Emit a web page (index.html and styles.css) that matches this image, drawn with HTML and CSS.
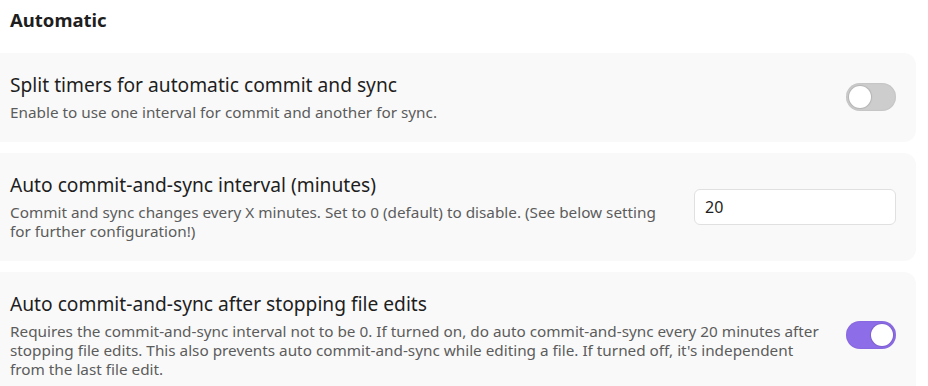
FILE: index.html
```html
<!DOCTYPE html>
<html lang="en">
<head>
<meta charset="utf-8">
<title>Automatic</title>
<link rel="stylesheet" href="styles.css">
</head>
<body>
<div class="page">
  <h2 class="heading">Automatic</h2>

  <div class="setting">
    <div class="info">
      <div class="name">Split timers for automatic commit and sync</div>
      <div class="desc">Enable to use one interval for commit and another for sync.</div>
    </div>
    <div class="control">
      <div class="toggle"><div class="knob"></div></div>
    </div>
  </div>

  <div class="setting">
    <div class="info">
      <div class="name">Auto commit-and-sync interval (minutes)</div>
      <div class="desc">Commit and sync changes every X minutes. Set to 0 (default) to disable. (See below setting for further configuration!)</div>
    </div>
    <div class="control">
      <input class="text-input" type="text" value="20">
    </div>
  </div>

  <div class="setting">
    <div class="info">
      <div class="name">Auto commit-and-sync after stopping file edits</div>
      <div class="desc">Requires the commit-and-sync interval not to be 0. If turned on, do auto commit-and-sync every 20 minutes after stopping file edits. This also prevents auto commit-and-sync while editing a file. If turned off, it's independent from the last file edit.</div>
    </div>
    <div class="control">
      <div class="toggle on"><div class="knob"></div></div>
    </div>
  </div>
</div>
</body>
</html>
```

FILE: styles.css
```css
html, body {
  margin: 0;
  padding: 0;
  background: #ffffff;
}

body {
  font-family: "Noto Sans", sans-serif;
  color: #222222;
  overflow: hidden;
}

.page {
  width: 916px;
  display: flex;
  flex-direction: column;
  gap: 11px;
}

.heading {
  margin: 0;
  padding: 8px 0 0 10px;
  height: 34px;
  font-size: 18.5px;
  font-weight: 700;
  line-height: 24px;
  color: #1e1e1e;
}

.setting {
  background: #f9f9f9;
  border-radius: 0 12px 12px 0;
  padding: 19px 20px 20px 10px;
  display: flex;
  align-items: center;
  gap: 18px;
}

.info {
  flex: 1 1 auto;
  display: flex;
  flex-direction: column;
  gap: 5px;
}

.name {
  font-size: 19.2px;
  line-height: 26px;
  color: #1e1e1e;
}

.desc {
  font-size: 15.3px;
  line-height: 19px;
  color: #5c5c5c;
}

.control {
  flex: 0 0 auto;
  display: flex;
  align-items: center;
}

.toggle {
  width: 50px;
  height: 28px;
  border-radius: 14px;
  background: #cdcdcd;
  box-shadow: inset 0 0 2px rgba(0,0,0,0.12);
  display: flex;
  align-items: center;
  padding: 0 3px;
  box-sizing: border-box;
}

.knob {
  width: 22px;
  height: 22px;
  border-radius: 50%;
  background: #ffffff;
  box-shadow: 0 0 1px 1px rgba(0,0,0,0.12);
}

.toggle.on {
  background: #8e6de9;
  justify-content: flex-end;
}

.text-input {
  width: 202px;
  height: 36px;
  box-sizing: border-box;
  border: 1px solid #e0e0e0;
  border-radius: 6px;
  background: #ffffff;
  padding: 0 10px;
  font-family: "Noto Sans", sans-serif;
  font-size: 16px;
  color: #1e1e1e;
  outline: none;
}
```
